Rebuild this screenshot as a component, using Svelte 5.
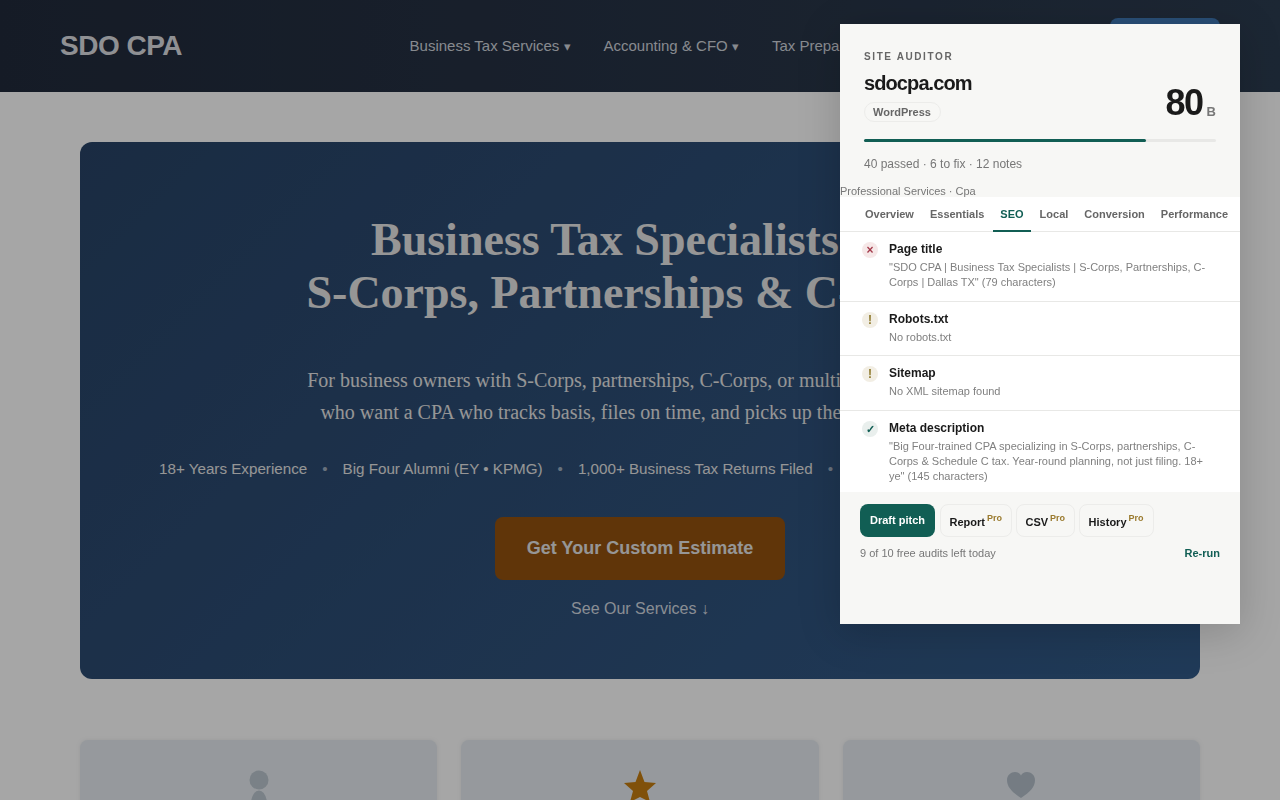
<script lang="ts">
	const tabs = ['Overview', 'Essentials', 'SEO', 'Local', 'Conversion', 'Performance'];
	const checks = [
		{
			state: 'fail',
			mark: '×',
			title: 'Page title',
			detail: '"SDO CPA | Business Tax Specialists | S-Corps, Partnerships, C-Corps | Dallas TX" (79 characters)'
		},
		{ state: 'warn', mark: '!', title: 'Robots.txt', detail: 'No robots.txt' },
		{ state: 'warn', mark: '!', title: 'Sitemap', detail: 'No XML sitemap found' },
		{
			state: 'pass',
			mark: '✓',
			title: 'Meta description',
			detail:
				'"Big Four-trained CPA specializing in S-Corps, partnerships, C-Corps & Schedule C tax. Year-round planning, not just filing. 18+ ye" (145 characters)'
		}
	];
	const proActions = ['Report', 'CSV', 'History'];
	const facts = [
		'18+ Years Experience',
		'Big Four Alumni (EY • KPMG)',
		'1,000+ Business Tax Returns Filed',
		'Trusted by Business Owners Nationwide'
	];
</script>

<div class="page">
	<header class="site-header">
		<div class="logo">SDO CPA</div>
		<nav class="nav">
			<span>Business Tax Services <small>▾</small></span>
			<span>Accounting &amp; CFO <small>▾</small></span>
			<span>Tax Preparation <small>▾</small></span>
			<span>About Us</span>
			<span>Our Firm</span>
			<span class="nav__cta">Contact Us</span>
		</nav>
	</header>

	<section class="hero">
		<h1>Business Tax Specialists for<br />S-Corps, Partnerships &amp; C-Corps</h1>
		<p class="hero__lead">
			For business owners with S-Corps, partnerships, C-Corps, or multi-state operations<br />
			who want a CPA who tracks basis, files on time, and picks up the phone all year
		</p>
		<div class="facts">
			{#each facts as fact, i}
				{#if i > 0}<span class="facts__dot">•</span>{/if}
				<span>{fact}</span>
			{/each}
		</div>
		<div class="hero__cta">Get Your Custom Estimate</div>
		<div class="hero__link">See Our Services ↓</div>
	</section>

	<section class="cards">
		<div class="card">
			<svg width="20" height="40" viewBox="0 0 20 40">
				<circle cx="10" cy="10" r="9.5" fill="#bcc6d0" />
				<path d="M1 40 Q2 21 10 20.5 Q18 21 19 40 Z" fill="#bcc6d0" />
			</svg>
		</div>
		<div class="card">
			<svg width="34" height="40" viewBox="0 0 34 40">
				<polygon points="17,0 21.5,12 33,13 24,21 27,32 17,27 7,32 10,21 1,13 12.5,12" fill="#c57d10" />
			</svg>
		</div>
		<div class="card">
			<svg width="30" height="40" viewBox="0 0 30 40">
				<path d="M15 28 C6 22 1 17 1 10 C1 5 5 2 9 2 C12 2 14 3.5 15 5.5 C16 3.5 18 2 21 2 C25 2 29 5 29 10 C29 17 24 22 15 28 Z" fill="#b4bfca" />
			</svg>
		</div>
	</section>
</div>

<div class="scrim"></div>

<aside class="auditor">
	<div class="auditor__head">
		<div class="eyebrow">SITE AUDITOR</div>
		<div class="summary">
			<div>
				<div class="domain">sdocpa.com</div>
				<span class="pill">WordPress</span>
			</div>
			<div class="score"><strong>80</strong><span>B</span></div>
		</div>
		<div class="bar"><div class="bar__fill" style="width: {80}%"></div></div>
		<div class="counts">40 passed · 6 to fix · 12 notes</div>
	</div>
	<div class="category">Professional Services · Cpa</div>
	<div class="tabs">
		{#each tabs as tab}
			<div class="tab" class:tab--active={tab === 'SEO'}>{tab}</div>
		{/each}
	</div>
	<div class="checks">
		{#each checks as check}
			<div class="check">
				<span class="check__mark check__mark--{check.state}">{check.mark}</span>
				<div>
					<div class="check__title">{check.title}</div>
					<div class="check__detail">{check.detail}</div>
				</div>
			</div>
		{/each}
	</div>
	<div class="foot">
		<div class="actions">
			<div class="btn btn--primary">Draft pitch</div>
			{#each proActions as action}
				<div class="btn">{action}<sup>Pro</sup></div>
			{/each}
		</div>
		<div class="quota">
			<span>9 of 10 free audits left today</span>
			<strong>Re-run</strong>
		</div>
	</div>
</aside>

<style>
	:global(body) {
		margin: 0;
		height: 800px;
		overflow: hidden;
		background: #fff;
		font-family: 'Liberation Sans', Arial, sans-serif;
	}

	.page {
		height: 800px;
		overflow: hidden;
	}

	.site-header {
		display: flex;
		align-items: center;
		height: 92px;
		padding: 0 60px;
		background: linear-gradient(90deg, #212a3b, #2c3c50);
	}

	.logo {
		font-size: 28px;
		font-weight: 700;
		letter-spacing: -0.5px;
		color: #dcdee2;
	}

	.nav {
		display: flex;
		align-items: center;
		gap: 33px;
		margin-left: auto;
		padding-bottom: 2px;
		font-size: 15px;
		color: #d0d4dc;
		white-space: nowrap;
	}

	.nav__cta {
		width: 110px;
		margin-left: 2px;
		padding: 19px 0;
		border-radius: 8px;
		background: #3f78b5;
		color: #fff;
		text-align: center;
	}

	.hero {
		margin: 50px 80px 0;
		height: 537px;
		box-sizing: border-box;
		padding-top: 71px;
		border-radius: 12px;
		background: linear-gradient(135deg, #284366, #325a88);
		color: #e6e6e6;
		text-align: center;
	}

	h1 {
		margin: 0;
		font-family: 'Liberation Serif', 'Times New Roman', serif;
		font-size: 46px;
		line-height: 53px;
		font-weight: 700;
	}

	.hero__lead {
		margin: 45px 0 0;
		font-family: 'Liberation Serif', 'Times New Roman', serif;
		font-size: 20px;
		line-height: 32px;
		white-space: nowrap;
	}

	.facts {
		display: flex;
		justify-content: center;
		gap: 15px;
		margin-top: 29px;
		font-size: 15.2px;
		line-height: 24px;
		white-space: nowrap;
	}

	.facts__dot {
		color: #a0aec0;
	}

	.hero__cta {
		width: 290px;
		height: 63px;
		margin: 36px auto 0;
		border-radius: 8px;
		background: #94520f;
		font-size: 18px;
		font-weight: 700;
		line-height: 63px;
	}

	.hero__link {
		margin-top: 19px;
		font-size: 16px;
		line-height: 20px;
		color: #d4dae2;
	}

	.cards {
		display: grid;
		grid-template-columns: repeat(3, 1fr);
		gap: 24px;
		margin: 61px 80px 0;
	}

	.card {
		display: flex;
		justify-content: center;
		height: 200px;
		padding-top: 30px;
		background: #e6ecf1;
		border-radius: 8px;
		box-shadow: 0 0 4px rgba(120, 130, 140, 0.15);
	}

	.scrim {
		position: fixed;
		inset: 0;
		background: rgba(0, 0, 0, 0.35);
		backdrop-filter: blur(0.5px);
	}

	.auditor {
		position: fixed;
		top: 24px;
		right: 40px;
		width: 400px;
		height: 600px;
		background: #f7f7f5;
		box-shadow: 0 8px 40px rgba(0, 0, 0, 0.18);
		color: #1a1a1a;
	}

	.auditor__head {
		padding: 27px 24px 0;
	}

	.eyebrow {
		font-size: 10px;
		line-height: 12px;
		font-weight: 700;
		letter-spacing: 1.6px;
		color: #666;
	}

	.summary {
		display: flex;
		justify-content: space-between;
		align-items: flex-end;
		margin-top: 8px;
	}

	.domain {
		font-size: 20px;
		line-height: 24px;
		font-weight: 700;
		letter-spacing: -0.9px;
	}

	.pill {
		display: inline-block;
		margin-top: 7px;
		padding: 0 9px 0 8px;
		font-size: 11px;
		line-height: 18px;
		font-weight: 700;
		color: #666;
		border: 1px solid #ececea;
		border-radius: 999px;
	}

	.score {
		display: flex;
		align-items: baseline;
		gap: 4px;
		margin-bottom: -3px;
	}

	.score strong {
		font-size: 36px;
		line-height: 44px;
		letter-spacing: -1.5px;
	}

	.score span {
		font-size: 13px;
		font-weight: 700;
		color: #777;
		transform: translateY(1px);
	}

	.bar {
		height: 3px;
		margin-top: 17px;
		background: #e8e8e6;
		border-radius: 2px;
	}

	.bar__fill {
		height: 100%;
		background: #115e54;
		border-radius: 2px;
	}

	.counts {
		margin-top: 14px;
		font-size: 12px;
		line-height: 16px;
		color: #777;
	}

	.category {
		margin-top: 13px;
		font-size: 11px;
		line-height: 12px;
		color: #777;
	}

	.tabs {
		display: flex;
		height: 34px;
		padding-left: 17px;
		background: #fff;
		border-bottom: 1px solid #e8e8e6;
	}

	.tab {
		padding: 0 8px;
		margin-bottom: -1px;
		font-size: 11px;
		font-weight: 700;
		line-height: 35px;
		color: #666;
	}

	.tab--active {
		margin: 0 1px -1px;
		padding: 0 7px;
		color: #115e54;
		border-bottom: 2px solid #115e54;
	}

	.check {
		display: flex;
		gap: 11px;
		padding: 10px 22px;
		background: #fff;
		border-bottom: 1px solid #e8e8e6;
	}

	.check:last-child {
		padding-bottom: 7px;
		border-bottom: none;
	}

	.check__mark {
		flex: none;
		width: 16px;
		height: 16px;
		border-radius: 50%;
		font-size: 12px;
		font-weight: 700;
		line-height: 16px;
		text-align: center;
	}

	.check__mark--fail {
		background: #f6e8e8;
		color: #a33a4a;
	}

	.check__mark--warn {
		background: #f2eee4;
		color: #8f7a2e;
		font-size: 12px;
	}

	.check__mark--pass {
		background: #e9efed;
		color: #115e54;
		font-size: 11px;
	}

	.check__title {
		font-size: 12px;
		line-height: 15px;
		font-weight: 700;
	}

	.check__detail {
		margin-top: 3px;
		font-size: 11px;
		line-height: 15.4px;
		color: #808080;
	}

	.foot {
		padding: 12px 20px 0;
	}

	.actions {
		display: flex;
		gap: 4px;
	}

	.btn {
		box-sizing: border-box;
		height: 33px;
		padding: 0 9px 0 8.5px;
		font-size: 11px;
		font-weight: 700;
		line-height: 34px;
		border: 1px solid #ececea;
		border-radius: 8px;
	}

	.btn sup {
		margin-left: 2px;
		font-size: 9px;
		line-height: 0;
		color: #9a7a2e;
	}

	.btn--primary {
		margin-right: 1px;
		padding: 0 10px;
		color: #fff;
		background: #115e54;
		border: none;
		line-height: 32px;
	}

	.quota {
		display: flex;
		justify-content: space-between;
		margin-top: 9px;
		font-size: 11px;
		line-height: 14px;
		color: #777;
	}

	.quota strong {
		color: #115e54;
	}
</style>
